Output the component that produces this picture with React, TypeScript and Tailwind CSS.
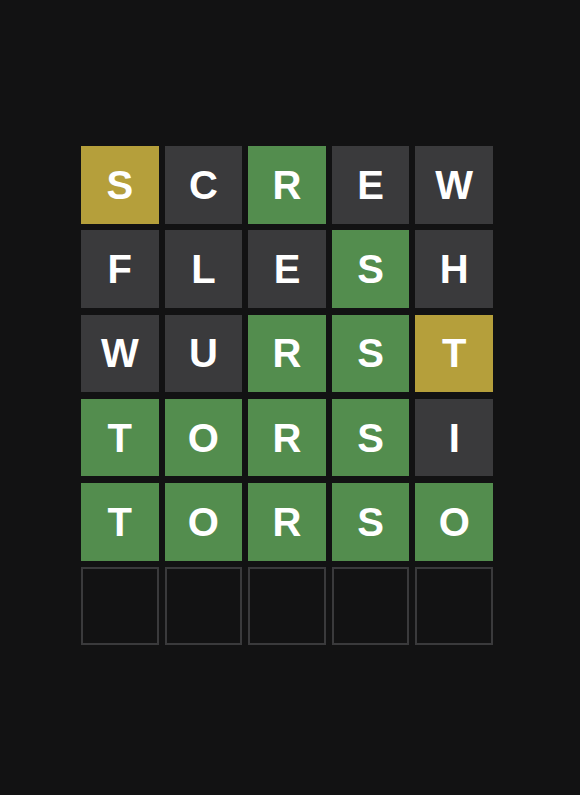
import React from "react";

type C = "y" | "g" | "d" | "e";
const rows: [string, C][][] = [
  [["S","y"],["C","d"],["R","g"],["E","d"],["W","d"]],
  [["F","d"],["L","d"],["E","d"],["S","g"],["H","d"]],
  [["W","d"],["U","d"],["R","g"],["S","g"],["T","y"]],
  [["T","g"],["O","g"],["R","g"],["S","g"],["I","d"]],
  [["T","g"],["O","g"],["R","g"],["S","g"],["O","g"]],
  [["","e"],["","e"],["","e"],["","e"],["","e"]],
];

const cls: Record<C, string> = {
  y: "bg-[#b59f3b]",
  g: "bg-[#538d4e]",
  d: "bg-[#3a3a3c]",
  e: "border-2 border-[#3a3a3c] bg-[#121213]",
};

export default function App() {
  return (
    <div className="w-[580px] h-[795px] bg-[#121213] flex justify-center pr-[6px] pt-[146px]">
      <div className="grid grid-cols-5 grid-rows-6 gap-x-[6px] gap-y-[6.8px] w-[412px] h-[499px]">
        {rows.flat().map(([l, c], i) => (
          <div
            key={i}
            className={`${cls[c]} flex items-center justify-center text-white font-bold text-[40px] leading-none`}
            style={{ fontFamily: '"Liberation Sans", Arial, sans-serif' }}
          >
            {l}
          </div>
        ))}
      </div>
    </div>
  );
}
